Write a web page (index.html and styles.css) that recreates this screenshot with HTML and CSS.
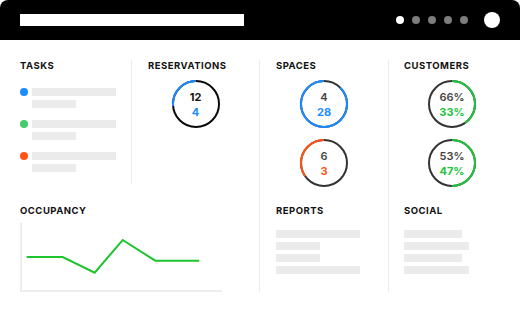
FILE: index.html
```html
<!DOCTYPE html>
<html lang="en">

<head>
    <meta charset="UTF-8">
    <meta name="viewport" content="width=device-width, initial-scale=1.0">
    <title>Dashboard</title>
    <link rel="stylesheet" href="styles.css">
</head>

<body>
    <div class="window">
        <header class="topbar">
            <div class="address"></div>
            <div class="dots">
                <span class="dot on"></span>
                <span class="dot"></span>
                <span class="dot"></span>
                <span class="dot"></span>
                <span class="dot"></span>
            </div>
            <div class="avatar"></div>
        </header>

        <main class="board">
            <!-- Row 1 -->
            <section class="panel first tasks">
                <h2>Tasks</h2>
                <ul class="task-list">
                    <li><span class="task-dot blue"></span><div class="lines"><i class="bar w84"></i><i class="bar w44"></i></div></li>
                    <li><span class="task-dot green"></span><div class="lines"><i class="bar w84"></i><i class="bar w44"></i></div></li>
                    <li><span class="task-dot orange"></span><div class="lines"><i class="bar w84"></i><i class="bar w44"></i></div></li>
                </ul>
            </section>

            <section class="panel">
                <h2>Reservations</h2>
                <div class="rings">
                    <div class="ring ccw dark">
                        <svg viewBox="0 0 48 48"><circle class="track" cx="24" cy="24" r="23"/><circle class="arc blue" cx="24" cy="24" r="23" stroke-dasharray="38 200"/></svg>
                        <b>12</b>
                        <b class="blue">4</b>
                    </div>
                </div>
            </section>

            <section class="panel">
                <h2>Spaces</h2>
                <div class="rings">
                    <div class="ring ccw">
                        <svg viewBox="0 0 48 48"><circle class="track" cx="24" cy="24" r="23"/><circle class="arc blue" cx="24" cy="24" r="23" stroke-dasharray="126 200"/></svg>
                        <b class="muted">4</b>
                        <b class="blue">28</b>
                    </div>
                    <div class="ring ccw">
                        <svg viewBox="0 0 48 48"><circle class="track" cx="24" cy="24" r="23"/><circle class="arc orange" cx="24" cy="24" r="23" stroke-dasharray="50 200"/></svg>
                        <b class="muted">6</b>
                        <b class="orange">3</b>
                    </div>
                </div>
            </section>

            <section class="panel last">
                <h2>Customers</h2>
                <div class="rings">
                    <div class="ring">
                        <svg viewBox="0 0 48 48"><circle class="track" cx="24" cy="24" r="23"/><circle class="arc green" cx="24" cy="24" r="23" stroke-dasharray="58 200"/></svg>
                        <b class="muted">66%</b>
                        <b class="green">33%</b>
                    </div>
                    <div class="ring">
                        <svg viewBox="0 0 48 48"><circle class="track" cx="24" cy="24" r="23"/><circle class="arc green" cx="24" cy="24" r="23" stroke-dasharray="72 200"/></svg>
                        <b class="muted">53%</b>
                        <b class="green">47%</b>
                    </div>
                </div>
            </section>

            <!-- Row 2 -->
            <section class="panel first bottom wide">
                <h2>Occupancy</h2>
                <div class="chart">
                    <svg viewBox="0 0 200 67" width="200" height="67">
                        <polyline points="4.7,34 40.7,34 72.7,49.7 100.7,17 133.3,37.7 177.3,37.7" />
                    </svg>
                </div>
            </section>

            <section class="panel bottom">
                <h2>Reports</h2>
                <div class="lines stack">
                    <i class="bar w84"></i>
                    <i class="bar w44"></i>
                    <i class="bar w44"></i>
                    <i class="bar w84"></i>
                </div>
            </section>

            <section class="panel bottom last">
                <h2>Social</h2>
                <div class="lines stack">
                    <i class="bar w58"></i>
                    <i class="bar w65"></i>
                    <i class="bar w58"></i>
                    <i class="bar w65"></i>
                </div>
            </section>
        </main>
    </div>
</body>

</html>
```

FILE: styles.css
```css
body {
    margin: 0;
    background-color: #fff;
    font-family: "Inter", "Liberation Sans", sans-serif;
    color: #111;
}

.window {
    width: 520px;
    height: 312px;
    overflow: hidden;
}

/* Top bar */
.topbar {
    display: flex;
    align-items: center;
    height: 40px;
    padding: 0 20px;
    background-color: #000;
    border-radius: 8px 8px 0 0;
}

.address {
    width: 224px;
    height: 12px;
    background-color: #fff;
}

.dots {
    display: flex;
    gap: 8px;
    margin-left: auto;
}

.dot {
    width: 8px;
    height: 8px;
    border-radius: 50%;
    background-color: #7d7d7d;
}

.dot.on {
    background-color: #fff;
}

.avatar {
    width: 16px;
    height: 16px;
    margin-left: 16px;
    border-radius: 50%;
    background-color: #fff;
}

/* Board grid */
.board {
    display: grid;
    grid-template-columns: 112px 128px 129px 1fr;
    padding: 20px 20px 0;
}

.panel {
    padding: 0 16px 8px;
    border-right: 1px solid #ebebeb;
}

.panel.first {
    padding-left: 0;
    padding-right: 12px;
}

.panel.last {
    padding-left: 15px;
    padding-right: 0;
    border-right: none;
}

.panel.tasks {
    align-self: start;
    padding-bottom: 12px;
}

.panel.bottom {
    padding-top: 10px;
    padding-bottom: 0;
}

.panel.wide {
    grid-column: span 2;
}

h2 {
    margin: 0;
    font-size: 9.5px;
    line-height: 12px;
    font-weight: 700;
    letter-spacing: 0.5px;
    text-transform: uppercase;
    color: #111;
}

/* Tasks */
.task-list {
    list-style: none;
    margin: 16px 0 0;
    padding: 0;
    display: flex;
    flex-direction: column;
    gap: 12px;
}

.task-list li {
    display: flex;
    gap: 4px;
}

.task-dot {
    flex-shrink: 0;
    width: 8px;
    height: 8px;
    border-radius: 50%;
}

.task-dot.blue { background-color: #1a8cff; }
.task-dot.green { background-color: #46c96a; }
.task-dot.orange { background-color: #ff5414; }

.lines {
    display: flex;
    flex-direction: column;
    gap: 4px;
}

.lines.stack {
    margin-top: 13px;
}

.bar {
    display: block;
    height: 8px;
    background-color: #ebebeb;
}

.w84 { width: 84px; }
.w44 { width: 44px; }
.w58 { width: 58px; }
.w65 { width: 65px; }

/* Rings */
.rings {
    display: flex;
    flex-direction: column;
    align-items: center;
    gap: 11px;
    margin-top: 8px;
}

.ring {
    position: relative;
    width: 48px;
    height: 48px;
    display: flex;
    flex-direction: column;
    align-items: center;
    justify-content: center;
    padding-top: 2px;
    box-sizing: border-box;
    font-size: 11px;
    line-height: 15px;
}

.ring svg {
    position: absolute;
    inset: 0;
    width: 48px;
    height: 48px;
    transform: rotate(-90deg);
}

.ring.ccw svg {
    transform: rotate(-90deg) scaleY(-1);
}

.ring circle {
    fill: none;
    stroke-width: 2;
}

.track { stroke: #333; }
.ring.dark .track { stroke: #0a0a0a; }

.arc.blue { stroke: #1a8cff; }
.arc.orange { stroke: #ff5414; }
.arc.green { stroke: #1ec43a; }

.ring b {
    position: relative;
    font-weight: 700;
}

.ring b.muted {
    font-weight: 600;
    color: #444;
}

b.blue { color: #1a8cff; }
b.orange { color: #ff5414; }
b.green { color: #1ec43a; }

/* Occupancy chart */
.chart {
    width: 200px;
    height: 67px;
    margin-top: 6px;
    border-left: 2px solid #ededed;
    border-bottom: 2px solid #ededed;
}

.chart svg {
    display: block;
}

.chart polyline {
    fill: none;
    stroke: #1ec42e;
    stroke-width: 2;
}
```
